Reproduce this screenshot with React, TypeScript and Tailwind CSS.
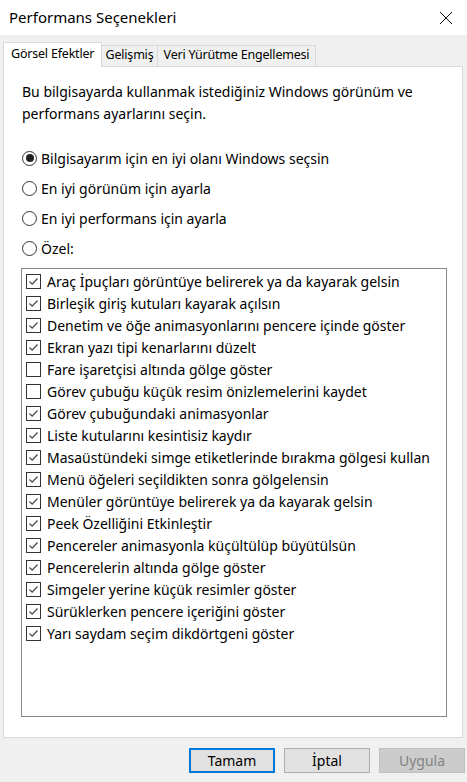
import React from 'react';

const font = { fontFamily: '"Noto Sans", "Open Sans", sans-serif' };

const items: { label: string; checked: boolean }[] = [
  { label: 'Araç İpuçları görüntüye belirerek ya da kayarak gelsin', checked: true },
  { label: 'Birleşik giriş kutuları kayarak açılsın', checked: true },
  { label: 'Denetim ve öğe animasyonlarını pencere içinde göster', checked: true },
  { label: 'Ekran yazı tipi kenarlarını düzelt', checked: true },
  { label: 'Fare işaretçisi altında gölge göster', checked: false },
  { label: 'Görev çubuğu küçük resim önizlemelerini kaydet', checked: false },
  { label: 'Görev çubuğundaki animasyonlar', checked: true },
  { label: 'Liste kutularını kesintisiz kaydır', checked: true },
  { label: 'Masaüstündeki simge etiketlerinde bırakma gölgesi kullan', checked: true },
  { label: 'Menü öğeleri seçildikten sonra gölgelensin', checked: true },
  { label: 'Menüler görüntüye belirerek ya da kayarak gelsin', checked: true },
  { label: 'Peek Özelliğini Etkinleştir', checked: true },
  { label: 'Pencereler animasyonla küçültülüp büyütülsün', checked: true },
  { label: 'Pencerelerin altında gölge göster', checked: true },
  { label: 'Simgeler yerine küçük resimler göster', checked: true },
  { label: 'Sürüklerken pencere içeriğini göster', checked: true },
  { label: 'Yarı saydam seçim dikdörtgeni göster', checked: true },
];

const radios = [
  { label: 'Bilgisayarım için en iyi olanı Windows seçsin', selected: true },
  { label: 'En iyi görünüm için ayarla', selected: false },
  { label: 'En iyi performans için ayarla', selected: false },
  { label: 'Özel:', selected: false },
];

const Radio = ({ selected }: { selected: boolean }) => (
  <span className="w-[15px] h-[15px] rounded-full border border-[#333] bg-white flex items-center justify-center shrink-0">
    {selected && <span className="w-[8px] h-[8px] rounded-full bg-[#222]" />}
  </span>
);

const Checkbox = ({ checked }: { checked: boolean }) => (
  <span className="w-[15px] h-[15px] border border-[#333] bg-white flex items-center justify-center shrink-0">
    {checked && (
      <svg width="11" height="11" viewBox="0 0 11 11">
        <path d="M1.5 5.5 L4.2 8.2 L9.5 2.5" fill="none" stroke="#444" strokeWidth="1.2" />
      </svg>
    )}
  </span>
);

export default function App() {
  return (
    <div className="w-[467px] h-[782px] bg-[#f0f0f0] flex flex-col text-black text-[14px]" style={font}>
      {/* Title bar */}
      <div className="h-[35px] bg-white flex items-center justify-between pl-[9px] pr-[14px]">
        <span className="text-[15px] leading-none">Performans Seçenekleri</span>
        <svg width="14" height="14" viewBox="0 0 14 14">
          <path d="M1 1 L13 13 M13 1 L1 13" stroke="#111" strokeWidth="1" />
        </svg>
      </div>

      {/* Tabs */}
      <div className="mt-[8px] -mb-[1px] pl-[3px] flex items-end h-[24px] relative z-10 text-[12.5px] tracking-[-0.2px] whitespace-nowrap">
        <div className="h-[25px] w-[99px] shrink-0 bg-white border border-[#d9d9d9] border-b-0 flex items-center pl-[7px] pb-[2px]">
          Görsel Efektler
        </div>
        <div className="h-[22px] w-[56px] shrink-0 border border-[#d9d9d9] border-l-0 flex items-center justify-center pb-[1px]">
          Gelişmiş
        </div>
        <div className="h-[22px] w-[158px] shrink-0 border border-[#d9d9d9] border-l-0 flex items-center justify-center pb-[1px]">
          Veri Yürütme Engellemesi
        </div>
      </div>

      {/* Panel */}
      <div className="ml-[3px] w-[460px] h-[672px] bg-white border border-[#d9d9d9] flex flex-col">
        <p className="mt-[14px] pl-[18px] leading-[22px] text-[14px]">
          Bu bilgisayarda kullanmak istediğiniz Windows görünüm ve
          <br />
          performans ayarlarını seçin.
        </p>

        <div className="mt-[18px] pl-[18px] flex flex-col">
          {radios.map((r) => (
            <div key={r.label} className="h-[30px] flex items-center gap-[4px]">
              <Radio selected={r.selected} />
              <span>{r.label}</span>
            </div>
          ))}
        </div>

        <div className="mt-[5px] ml-[17px] w-[426px] h-[449px] border border-[#828790] flex flex-col pt-[1px] pl-[4px]">
          {items.map((it) => (
            <div key={it.label} className="h-[22px] flex items-center gap-[6px]">
              <Checkbox checked={it.checked} />
              <span className="whitespace-nowrap">{it.label}</span>
            </div>
          ))}
        </div>
      </div>

      {/* Buttons */}
      <div className="mt-[10px] flex justify-end gap-[9px] pr-[2px]">
        <button className="w-[86px] h-[25px] bg-[#e1e1e1] border-2 border-[#0078d7] text-[14px] leading-none">
          Tamam
        </button>
        <button className="w-[86px] h-[25px] bg-[#e1e1e1] border border-[#adadad] text-[14px] leading-none">
          İptal
        </button>
        <button className="w-[86px] h-[25px] bg-[#cccccc] border border-[#bfbfbf] text-[#838383] text-[14px] leading-none">
          Uygula
        </button>
      </div>
    </div>
  );
}
